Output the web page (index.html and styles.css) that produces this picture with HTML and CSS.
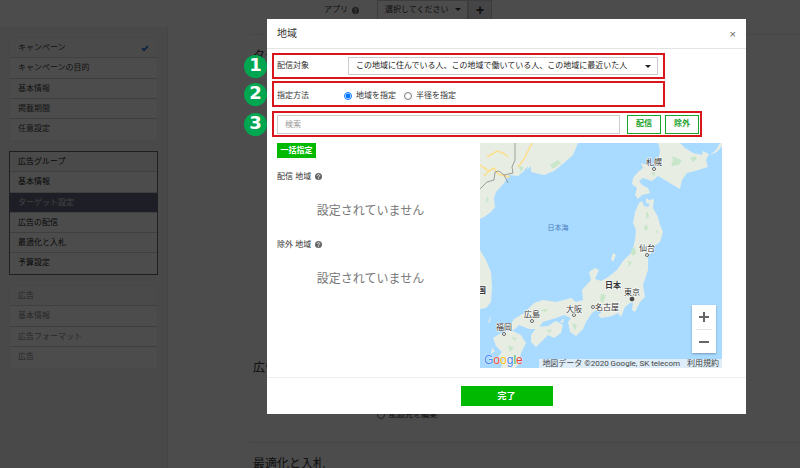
FILE: index.html
```html
<!DOCTYPE html>
<html lang="ja">
<head>
<meta charset="utf-8">
<title>ターゲット設定</title>
<link rel="stylesheet" href="styles.css">
</head>
<body>
<svg class="defs" aria-hidden="true">
  <symbol id="help" viewBox="0 0 14 14">
    <circle cx="7" cy="7" r="7" fill="currentColor"/>
    <path d="M4.6 5.4a2.4 2.2 0 1 1 3.6 1.9Q7 8 7 8.8M7 10v1.6" fill="none" stroke="#fff" stroke-width="1.7"/>
  </symbol>
</svg>
<div class="page">
  <aside class="side">
    <ul class="steps">
      <li class="head"><a href="#">キャンペーン</a><svg class="check" viewBox="0 0 8 8"><path d="M1 4.200l2 2L7 2" fill="none" stroke="currentColor" stroke-width="1.800"/></svg></li>
      <li><a href="#">キャンペーンの目的</a></li>
      <li><a href="#">基本情報</a></li>
      <li><a href="#">掲載期間</a></li>
      <li><a href="#">任意設定</a></li>
    </ul>
    <ul class="steps active">
      <li class="head"><a href="#">広告グループ</a></li>
      <li><a href="#">基本情報</a></li>
      <li class="current"><a href="#">ターゲット設定</a></li>
      <li><a href="#">広告の配信</a></li>
      <li><a href="#">最適化と入札</a></li>
      <li><a href="#">予算設定</a></li>
    </ul>
    <ul class="steps muted">
      <li class="head"><a href="#">広告</a></li>
      <li><a href="#">基本情報</a></li>
      <li><a href="#">広告フォーマット</a></li>
      <li><a href="#">広告</a></li>
    </ul>
  </aside>
  <main class="content">
    <div class="app-row">
      <label for="app">アプリ</label>
      <svg class="help"><use href="#help"/></svg>
      <div class="pick app-pick"><select id="app"><option>選択してください</option></select></div>
      <button class="add" type="button">+</button>
    </div>
    <section class="block target"><h2>ターゲット設定</h2></section>
    <section class="block delivery"><h2>広告の配信</h2>
      <label class="choice"><input type="radio" name="place">配置先を編集</label>
    </section>
    <section class="block"><h2>最適化と入札</h2></section>
  </main>
</div>

<div class="overlay">
  <div class="modal" role="dialog" aria-labelledby="title">
    <header class="modal-head">
      <h1 id="title">地域</h1>
      <button class="close" type="button">×</button>
    </header>
    <div class="modal-body">
      <div class="row">
        <span class="badge">1</span>
        <label class="name" for="audience">配信対象</label>
        <div class="pick wide"><select id="audience"><option>この地域に住んでいる人、この地域で働いている人、この地域に最近いた人</option></select></div>
      </div>
      <div class="row method">
        <span class="badge">2</span>
        <span class="name">指定方法</span>
        <label class="choice"><input type="radio" name="method" checked>地域を指定</label>
        <label class="choice"><input type="radio" name="method">半径を指定</label>
      </div>
      <div class="row search">
        <span class="badge">3</span>
        <input class="query" type="text" placeholder="検索" aria-label="検索">
        <button class="outline" type="button">配信</button>
        <button class="outline" type="button">除外</button>
      </div>
      <div class="panels">
        <div class="regions">
          <button class="bulk" type="button">一括指定</button>
          <h3>配信 地域 <svg class="help"><use href="#help"/></svg></h3>
          <p>設定されていません</p>
          <h3>除外 地域 <svg class="help"><use href="#help"/></svg></h3>
          <p>設定されていません</p>
        </div>
        <div class="map">
          <svg class="chart" viewBox="0 0 242 225" preserveAspectRatio="xMidYMid slice">
            <g class="land">
              <path d="M0 0H98L93 12 84 20 74 28 64 32 51 29 51 23 47 27 48 23 43 29 38 33 29 32 24 40 16 49 14 55 15 64 11 69 4 74 0 76Z"/>
              <path d="M0 107L6 117 11 129 12 144 11 159 6 165 0 166Z"/>
              <path d="M178 0L180 7 179 14 175 25 168 22 161 20 163 25 158 29 153 35 152 41 157 45 155 52 158 56 162 52 170 50 168 45 162 42 159 38 163 35 172 38 178 33 188 39 200 46 202 37 207 30 215 28 228 24 226 17 229 11 223 8 222 12 213 10 205 5 200 0Z"/>
              <path d="M159 60L162 58 164 63 168 64 170 61 166 60 166 55 169 57 174 56 173 65 178 74 180 82 183 89 180 99 173 104 171 111 168 112 168 127 163 142 165 154 160 159 155 169 152 167 153 160 150 160 145 164 141 174 138 170 132 173 121 175 118 172 122 169 116 167 112 170 106 179 103 186 96 193 90 189 88 179 91 175 84 172 76 175 63 179 58 186 49 186 39 182 34 187 25 185 31 181 34 176 44 170 54 160 63 157 76 159 91 155 96 159 103 157 102 147 111 137 109 129 115 125 119 127 115 136 121 138 128 134 137 127 143 118 152 109 155 97 156 87 153 80 155 69Z"/>
              <path d="M51 192L57 184 68 183 76 178 83 182 81 190 74 195 68 192 61 199 56 204 51 199Z"/>
              <path d="M13 195L21 190 31 187 41 192 46 200 41 210 38 222 35 225H21L24 215 18 214 22 209 16 203Z"/>
              <path d="M131 116L133 110 136 112 133 119ZM8 180L11 172 10 179ZM80 179L84 175 83 180ZM12 205L15 208 11 211ZM10 214L13 212 12 216Z"/>
              <path d="M230 12L236 7 240 0 242 0V3L237 9Z"/>
            </g>
            <g class="parks">
              <path d="M192 13l5 2 5 2-3 5-8 1 2-6zM210 15l5-2 2 3-4 3zM170 30l5-1v4zM166 70l2-1 1 5-3 2zM165 82l3 1-1 5-3-2zM175 89l3-2v3zM70 22l8-5 3 3-8 6zM39 22l5 3-4 4zM7 53l2 4-3 3zM148 118l4 1-3 5zM133 138l6 2-4 5-4-2zM121 151l5 1-3 8-3-3zM151 107l4-3 1 7-4 2zM66 187l6-1-2 4zM28 202l6 3-4 4zM32 194l5 1-3 3zM92 180l5 2-2 6zM60 167l8-1-3 3z"/>
            </g>
            <path class="road" d="M7 14L17 8 23 10 28 14M0 22L9 28 14 25 18 31 30 34M9 28L4 33M52 0L44 16 38 24"/>
            <path class="border-line" d="M35 0V17L32 24 33 30 24 32 19 28 15 29 14 37 7 39 0 46M24 32L28 40"/>
            <g class="towns">
              <circle cx="174" cy="26" r="1.500"/><circle cx="167" cy="112" r="1.500"/>
              <circle cx="52" cy="178" r="1.500"/><circle cx="24" cy="191" r="1.500"/>
              <circle cx="94" cy="172" r="1.500"/><circle cx="113" cy="164" r="1.500"/>
              <circle class="capital" cx="152" cy="156" r="2"/>
            </g>
            <g class="places">
              <text x="174" y="22">札幌</text>
              <text x="167" y="108">仙台</text>
              <text x="52" y="174">広島</text>
              <text x="24" y="187">福岡</text>
              <text x="94" y="169">大阪</text>
              <text x="127" y="167">名古屋</text>
              <text x="152" y="152">東京</text>
              <text class="country" x="133" y="145">日本</text>
              <text class="country" x="2" y="150">国</text>
              <text class="sea" x="78" y="87">日本海</text>
            </g>
          </svg>
          <div class="zoom"><button type="button" aria-label="拡大"><svg viewBox="0 0 12 12"><path d="M1 6h10M6 1v10"/></svg></button><button type="button" aria-label="縮小"><svg viewBox="0 0 12 12"><path d="M1 6h10"/></svg></button></div>
          <div class="logo"><span class="b">G</span><span class="r">o</span><span class="y">o</span><span class="b">g</span><span class="g">l</span><span class="r">e</span></div>
          <div class="credit"><span>地図データ ©2020 Google, SK telecom</span><a href="#">利用規約</a></div>
        </div>
      </div>
    </div>
    <footer class="modal-foot"><button class="done" type="button">完了</button></footer>
  </div>
</div>
</body>
</html>
```
FILE: styles.css
```css
* { box-sizing: border-box; }

body {
  margin: 0;
  background: #fff;
  color: #333;
  font: 8px/12px "Liberation Sans", "Noto Sans CJK JP", sans-serif;
}

button, input, select { margin: 0; font: inherit; color: inherit; }
h1, h2, h3, p, ul { margin: 0; padding: 0; font-weight: 400; }
a { color: inherit; text-decoration: none; }
.defs { position: absolute; width: 0; height: 0; }
.help { width: 7px; height: 7px; color: #666; }

/* Page behind the dialog */
.page { display: flex; height: 100vh; overflow: hidden; }

.side {
  display: flex;
  flex-direction: column;
  gap: 10px;
  width: 168px;
  margin-top: 27px;
  padding: 10px 9px;
  background: #f4f4f4;
  border-right: 1px solid #e8e8e8;
}
.steps { list-style: none; padding-bottom: 1px; border: 1px solid #eee; background: #fff; color: #444; }
.steps li {
  display: flex;
  align-items: center;
  justify-content: space-between;
  height: 20px;
  padding: 0 8px;
  border-bottom: 1px solid #d4d4d4;
}
.steps li:nth-child(2) { height: 21px; }
.steps li:last-child { border-bottom: 0; }
.steps .head { background: #f3f7f6; }
.steps.active { border-color: #667; color: #222; }
.steps .current { background: #666a80; color: #ddd; }
.steps.muted { color: #888; }
.check { width: 8px; height: 8px; color: #2478d0; }

.content { flex: 1; padding-left: 82px; }
.app-row { display: flex; align-items: center; height: 35px; padding: 0 0 14px 74px; border-bottom: 1px solid #eee; }
.app-row .help { margin-left: 4px; }
.app-pick { width: 91px; height: 21px; margin-left: 18px; }
.add { width: 24px; height: 21px; padding: 0; border: 1px solid #ccc; background: #e8e8ee; font-size: 14px; font-weight: 700; }
.block { padding: 13px 3px; border-bottom: 1px solid #e8e8e8; }
.block h2 { font-size: 12px; line-height: 16px; }
.target { height: 312px; border-bottom: 0; }
.delivery { height: 96px; }
.delivery .choice { margin: 33px 0 0 124px; }

/* Shared controls */
.pick { position: relative; }
.pick select {
  width: 100%;
  height: 100%;
  padding: 0 7px;
  border: 1px solid #ccc;
  border-radius: 0;
  background: #fff;
  appearance: none;
}
.pick::after {
  content: "";
  position: absolute;
  top: 8px;
  right: 7px;
  border: 3px solid transparent;
  border-top-color: currentColor;
  border-bottom: 0;
}
.choice { display: flex; align-items: center; gap: 4px; }
.choice input { width: 8px; height: 8px; }

/* Dialog */
.overlay { position: absolute; inset: 0; padding: 19px 54px 0 267px; background: rgba(0, 0, 0, .7); }
.modal { background: #fff; }
.modal-head {
  display: flex;
  align-items: center;
  justify-content: space-between;
  height: 30px;
  padding: 0 10px;
  border-bottom: 1px solid #e4e4e4;
}
.modal-head h1 { font-size: 10px; }
.close { padding: 0; border: 0; background: none; color: #666; font-size: 11px; }
.modal-body { padding: 4px 24px 9px 5px; }

.row {
  position: relative;
  display: flex;
  align-items: center;
  height: 26px;
  margin: 0 57px 2px 0;
  padding: 0 5px 0 3px;
  border: 2px solid #d9161c;
}
.name { width: 71px; }
.wide { flex: 1; height: 18px; color: #222; }
.method { gap: 8px; padding-top: 3px; }
.method .name { width: 59px; }
.search { margin: 4px 20px 6px 0; padding-right: 1px; }
.query { flex: 1; min-width: 0; height: 19px; margin-right: 7px; padding: 0 7px; border: 1px solid #ccc; }
.query::placeholder { color: #999; }
.outline { width: 34px; height: 19px; padding: 0; border: 1px solid #1ba32b; background: #fff; color: #1ba32b; font-weight: 700; }
.outline + .outline { margin-left: 4px; }

.badge {
  position: absolute;
  left: -30px;
  width: 23px;
  height: 23px;
  border-radius: 50%;
  background: #00a650;
  color: #fff;
  font: 700 18px/20px "DejaVu Sans", sans-serif;
  text-align: center;
}
.method .badge { top: 0; }

.panels { display: flex; padding-left: 5px; }
.regions { flex: 1; }
.bulk { display: block; width: 39px; height: 15px; margin-bottom: 13px; padding: 0; border: 0; background: #00b900; color: #fff; font-weight: 700; }
.regions h3 { font-size: 8px; line-height: 12px; }
.regions h3 .help { margin-left: 2px; vertical-align: -1px; }
.regions p { width: 187px; padding: 20px 0; color: #777; font-size: 12px; line-height: 16px; text-align: center; }

.map { position: relative; width: 242px; height: 225px; }
.chart { display: block; width: 100%; height: 100%; background: #a9daff; }
.land { fill: #e8ede4; }
.parks { fill: #c8e6c9; }
.road { fill: none; stroke: #fbe08c; stroke-width: 1.5; }
.border-line { fill: none; stroke: #888; stroke-width: .8; }
.towns { fill: #fff; stroke: #444; stroke-width: .8; }
.towns .capital { fill: #444; }
.places { fill: #333; font-size: 8px; text-anchor: middle; paint-order: stroke; stroke: #fff; stroke-width: 1px; }
.places .country { font-weight: 700; }
.places .sea { fill: #4a7fc0; stroke: none; font-size: 7px; }

.zoom { position: absolute; right: 6px; bottom: 15px; display: grid; width: 24px; padding: 0 4px; background: #fff; box-shadow: 0 1px 2px rgba(0, 0, 0, .3); }
.zoom button { display: grid; place-items: center; height: 24px; padding: 0; border: 0; background: none; }
.zoom button + button { border-top: 1px solid #e6e6e6; }
.zoom svg { width: 12px; height: 12px; stroke: #666; stroke-width: 2; }
.logo { position: absolute; left: 4px; bottom: 1px; font-size: 12px; line-height: 14px; text-shadow: 0 0 1px #fff, 0 0 1px #fff; }
.b { color: #4285f4; }
.r { color: #ea4335; }
.y { color: #fbbc05; }
.g { color: #34a853; }
.credit {
  position: absolute;
  right: 0;
  bottom: 0;
  display: flex;
  gap: 7px;
  padding: 0 3px;
  background: rgba(245, 245, 245, .7);
  color: #444;
  font-family: Roboto, "Noto Sans CJK JP", sans-serif;
  line-height: 9px;
}

.modal-foot { padding: 8px 9px; border-top: 1px solid #eee; text-align: center; }
.done { width: 92px; height: 20px; padding: 0; border: 0; background: #00b900; color: #fff; font-size: 9px; font-weight: 700; vertical-align: top; }
```
